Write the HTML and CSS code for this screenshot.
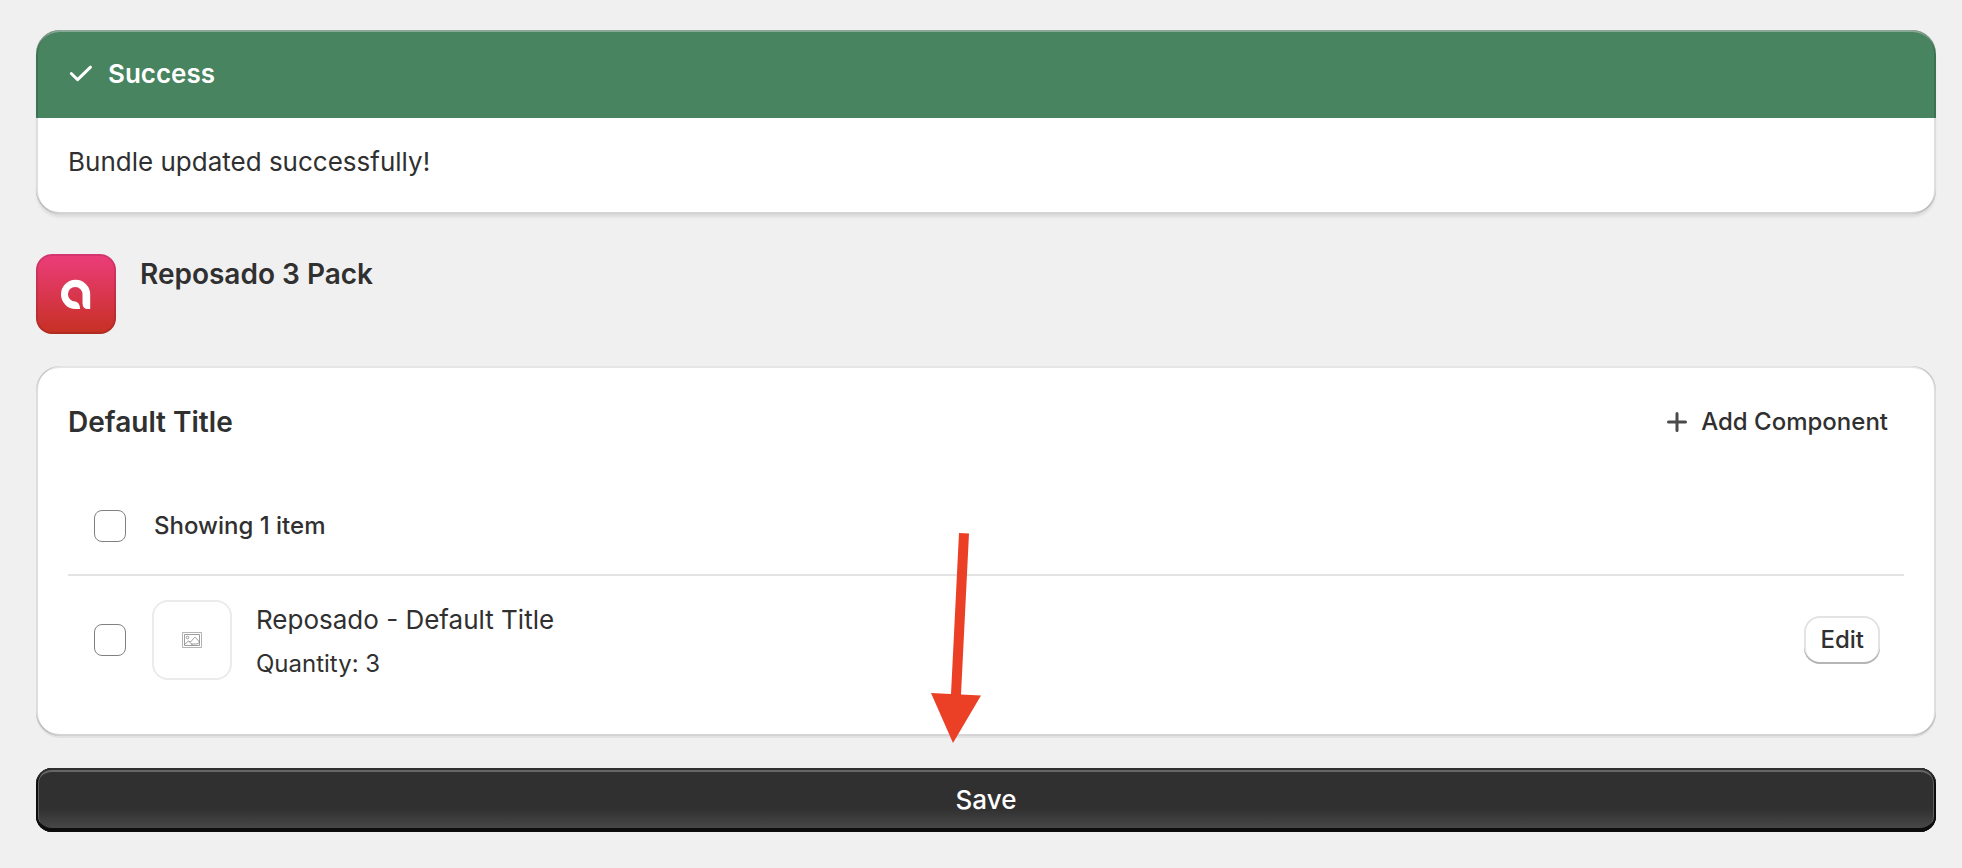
FILE: index.html
```html
<!DOCTYPE html>
<html lang="en">
<head>
<meta charset="utf-8">
<title>Reposado 3 Pack</title>
<link rel="stylesheet" href="styles.css">
</head>
<body>
<main class="page">
  <section class="card banner" role="status">
    <header class="banner-header">
      <svg class="icon" viewBox="0 0 40 40" aria-hidden="true"><path d="M11.300 19.500l6.300 6.200L30.500 13.200" fill="none" stroke="currentColor" stroke-width="3" stroke-linecap="round" stroke-linejoin="round"/></svg>
      <h2 class="banner-title">Success</h2>
    </header>
    <p class="banner-text">Bundle updated successfully!</p>
  </section>

  <header class="product">
    <svg class="product-logo" viewBox="0 0 80 80" aria-hidden="true">
      <defs><linearGradient id="logo-fill" x1="0" y1="0" x2="0" y2="1"><stop offset="0" stop-color="#ec3d7c"/><stop offset="1" stop-color="#c63022"/></linearGradient></defs>
      <rect width="80" height="80" rx="16" fill="url(#logo-fill)"/>
      <rect x="1" y="1" width="78" height="78" rx="15" fill="none" stroke="#000" stroke-opacity=".1" stroke-width="2"/>
      <path fill="#fff" d="M54.200 55V40.500A14.600 14.600 0 1 0 39.600 55H44C44 50.500 42.500 48.500 39.500 47.500A7.300 7.300 0 1 1 46.500 40.500V49Q46.500 55 52 55Z"/>
    </svg>
    <h1 class="heading">Reposado 3 Pack</h1>
  </header>

  <section class="card components">
    <header class="components-header">
      <h2 class="heading">Default Title</h2>
      <button class="add-button" type="button">
        <svg class="icon" viewBox="0 0 40 40" aria-hidden="true"><path d="M20 11.500v17M11.500 20h17" fill="none" stroke="#4a4a4a" stroke-width="3" stroke-linecap="round"/></svg>
        Add Component
      </button>
    </header>
    <div class="list-header">
      <input class="checkbox" type="checkbox" id="select-all">
      <label class="list-count" for="select-all">Showing 1 item</label>
    </div>
    <ul class="list">
      <li class="item">
        <input class="checkbox" type="checkbox" id="item-1">
        <span class="thumbnail">
          <svg class="thumbnail-icon" viewBox="0 0 20 16" aria-hidden="true"><g fill="none" stroke="#858585" stroke-width=".8"><path d="M.5.5h19v15H.5z" stroke="#a0a0a0"/><path d="M2.500 2.500h15v11h-15z"/><circle cx="5.500" cy="5.500" r="1.300"/><path d="M2.500 12.500l4-3.500 2 1 4-4.500q.5-.5 1 0l4 4.500M7 9.500l4 4M9 12h6l2.500-1.500"/></g></svg>
        </span>
        <div class="item-text">
          <label class="item-name" for="item-1">Reposado - Default Title</label>
          <span class="item-quantity">Quantity: 3</span>
        </div>
        <button class="edit-button" type="button">Edit</button>
      </li>
    </ul>
  </section>

  <button class="save-button" type="button">Save</button>

  <svg class="arrow" viewBox="0 0 50 210" aria-hidden="true"><path fill="#eb4025" d="M28 0l10 .4-8 161.200 20 .9L22 210 0 160l20 .9z"/></svg>
</main>
</body>
</html>
```
FILE: styles.css
```css
* {
  box-sizing: border-box;
}

body {
  margin: 0;
  background: #f0f0f0;
  color: #303030;
  font-family: Inter, "Liberation Sans", sans-serif;
  font-size: 26px;
  line-height: 40px;
}

h1,
h2,
p,
ul {
  margin: 0;
  padding: 0;
}

button {
  border: 0;
  color: inherit;
  font: inherit;
}

.page {
  position: relative;
  display: flex;
  flex-direction: column;
  gap: 32px;
  padding: 30px 26px 36px 36px;
}

.icon {
  flex: none;
  width: 40px;
  height: 40px;
}

.heading {
  font-size: 28px;
  font-weight: 600;
  line-height: 40px;
}

.card {
  position: relative;
  border-radius: 24px;
  background: #fff;
  box-shadow: 0 2px 0 #e2e2e2;
}

.card::after {
  content: "";
  position: absolute;
  inset: 0;
  border-radius: inherit;
  box-shadow: inset 2px 0 0 rgba(0, 0, 0, 0.13), inset -2px 0 0 rgba(0, 0, 0, 0.13), inset 0 -2px 0 rgba(0, 0, 0, 0.17), inset 0 2px 0 rgba(204, 204, 204, 0.5);
  pointer-events: none;
}

.banner {
  margin-bottom: 8px;
  box-shadow: 0 4px 3px -1px rgba(26, 26, 26, 0.1);
}

.banner-header {
  display: flex;
  align-items: center;
  gap: 8px;
  padding: 24px;
  border-radius: 24px 24px 0 0;
  background: #47845f;
  color: #fff;
}

.banner-title {
  font-size: 26px;
  font-weight: 600;
}

.banner-text {
  padding: 24px 32px 32px;
}

.product {
  display: flex;
  align-items: flex-start;
  gap: 24px;
}

.product-logo {
  width: 80px;
  height: 80px;
}

.components {
  padding: 32px;
}

.components-header {
  display: flex;
  align-items: center;
  justify-content: space-between;
  height: 48px;
}

.add-button {
  display: flex;
  align-items: center;
  gap: 4px;
  padding: 4px 16px;
  background: transparent;
  font-size: 24px;
  font-weight: 500;
}

.list-header {
  display: flex;
  align-items: center;
  gap: 28px;
  margin-top: 32px;
  padding: 28px 24px 28px 26px;
  border-bottom: 2px solid #e3e3e3;
}

.checkbox {
  flex: none;
  width: 32px;
  height: 32px;
  margin: 0;
  appearance: none;
  border: 1px solid #808080;
  border-radius: 8px;
  background: #fff;
}

.checkbox:checked {
  background: #303030;
}

.list-count {
  font-size: 24px;
  font-weight: 500;
}

.list {
  list-style: none;
}

.item {
  display: flex;
  align-items: center;
  gap: 24px;
  padding: 24px 24px 24px 26px;
}

.thumbnail {
  display: flex;
  flex: none;
  align-items: center;
  justify-content: center;
  width: 80px;
  height: 80px;
  margin-left: 2px;
  border: 2px solid #ebebeb;
  border-radius: 16px;
}

.thumbnail-icon {
  width: 20px;
  height: 16px;
}

.item-text {
  display: flex;
  flex: 1;
  flex-direction: column;
  gap: 8px;
}

.item-quantity {
  font-size: 24px;
  line-height: 32px;
}

.edit-button {
  height: 48px;
  padding: 4px 16px;
  border-radius: 16px;
  background: #fff;
  box-shadow: inset 0 -2px 0 #b5b5b5, inset 0 0 0 2px #e3e3e3;
  font-size: 24px;
  font-weight: 500;
}

.save-button {
  padding: 12px 24px;
  border-radius: 16px;
  background: linear-gradient(#303030 63%, #4c4c4c);
  box-shadow: inset 0 2px 0 #303030, inset 0 -4px 0 #0d0d0d, inset 2px 0 0 #0d0d0d, inset -2px 0 0 #0d0d0d, inset 0 4px 0 #666, inset 3px 0 0 #606060, inset -3px 0 0 #606060;
  color: #fff;
  font-weight: 500;
}

/* Annotation drawn over the page, pointing at the save button. */
.arrow {
  position: absolute;
  top: 533px;
  left: calc(50% - 50px);
  width: 50px;
  height: 210px;
  pointer-events: none;
}
```
